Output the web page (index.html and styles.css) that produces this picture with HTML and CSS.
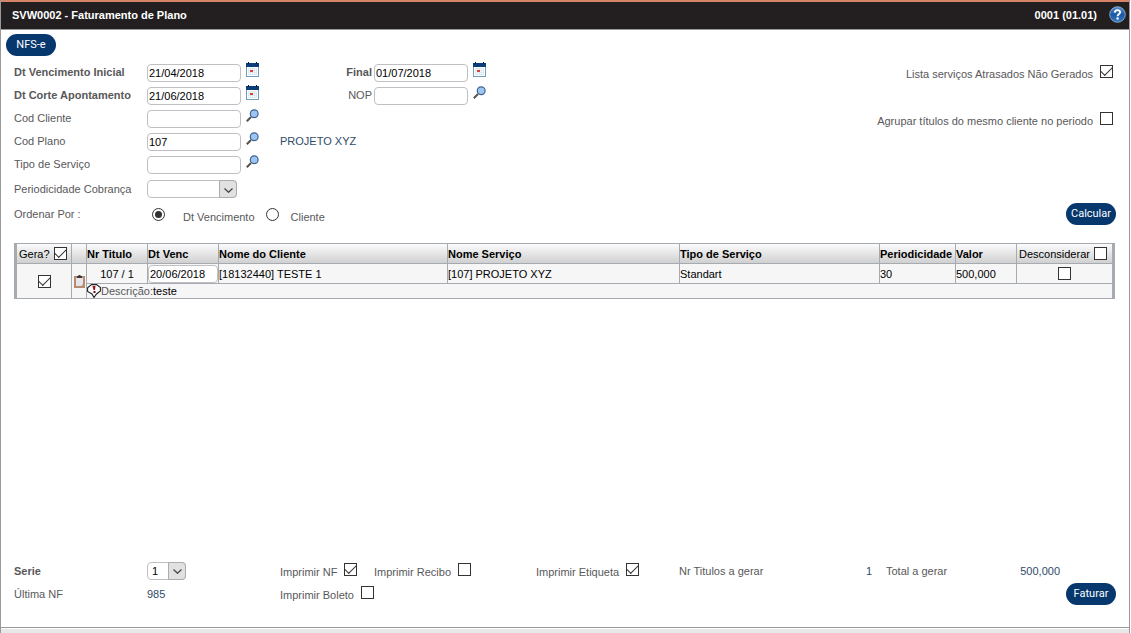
FILE: index.html
```html
<!DOCTYPE html>
<html lang="pt-BR">
<head>
<meta charset="utf-8">
<title>SVW0002 - Faturamento de Plano</title>
<link rel="stylesheet" href="styles.css">
</head>
<body>
<svg class="defs" aria-hidden="true">
  <symbol id="calendar" viewBox="0 0 13 15">
    <rect x="0.5" y="2.5" width="12" height="12" fill="#fff" stroke="#6f9dbd"/>
    <path d="M0 1h13v4H0z" fill="#0b3d78"/>
    <path d="M2 0h1v2H2zM10 0h1v2h-1z" fill="#001c40"/>
    <path d="M2.500 6.500h8v6h-8zM4.500 6v7M6.500 6v7M8.500 6v7M2 8.500h9M2 10.500h9" fill="none" stroke="#d5e4ea" stroke-width=".7"/>
    <rect x="4" y="8" width="3" height="2" fill="#d8403c"/>
  </symbol>
  <symbol id="search" viewBox="0 0 13 13">
    <path d="M0.800 12.200 5 8" stroke="#5a524c" stroke-width="2"/>
    <circle cx="8.200" cy="4.700" r="3.900" fill="#9cc5f5" stroke="#42648c" stroke-width="1.200"/>
  </symbol>
  <symbol id="chevron" viewBox="0 0 9 5">
    <path d="M0.500 0.500 4.500 4.300 8.500 0.500" fill="none" stroke="#444" stroke-width="1.200"/>
  </symbol>
</svg>
<div class="window">
  <header class="titlebar">
    <h1>SVW0002 - Faturamento de Plano</h1>
    <span class="code">0001 (01.01)</span>
    <button class="help" type="button" aria-label="Ajuda">
      <svg viewBox="0 0 17 17" width="17" height="17">
        <defs><linearGradient id="hg" x1="0" y1="0" x2="0" y2="1"><stop offset="0" stop-color="#5a92cf"/><stop offset=".5" stop-color="#1b58a5"/><stop offset="1" stop-color="#3479c4"/></linearGradient></defs>
        <circle cx="8.500" cy="8.500" r="7.800" fill="url(#hg)" stroke="#9dbbdc" stroke-width=".8"/>
        <path d="M5.800 6.600C5.900 3.300 11.300 3.400 11.200 6.300 11.100 8 8.700 8.200 8.600 10.200" fill="none" stroke="#fff" stroke-width="1.900"/>
        <circle cx="8.600" cy="12.500" r="1.200" fill="#fff"/>
      </svg>
    </button>
  </header>
  <main>
    <div class="toolbar"><button class="btn" type="button">NFS-e</button></div>
    <form class="filters">
      <div class="fields">
        <div class="row">
          <label class="strong" for="ini">Dt Vencimento Inicial</label>
          <span class="field"><input class="text" id="ini" value="21/04/2018"><button class="icon" type="button" aria-label="Calendário"><svg width="13" height="15"><use href="#calendar"/></svg></button></span>
          <span class="field"><label class="second strong" for="fim">Final</label><input class="text" id="fim" value="01/07/2018"><button class="icon" type="button" aria-label="Calendário"><svg width="13" height="15"><use href="#calendar"/></svg></button></span>
        </div>
        <div class="row">
          <label class="strong" for="corte">Dt Corte Apontamento</label>
          <span class="field"><input class="text" id="corte" value="21/06/2018"><button class="icon" type="button" aria-label="Calendário"><svg width="13" height="15"><use href="#calendar"/></svg></button></span>
          <span class="field"><label class="second" for="nop">NOP</label><input class="text" id="nop"><button class="icon" type="button" aria-label="Pesquisar"><svg width="13" height="13"><use href="#search"/></svg></button></span>
        </div>
        <div class="row">
          <label for="cli">Cod Cliente</label>
          <span class="field"><input class="text" id="cli"><button class="icon" type="button" aria-label="Pesquisar"><svg width="13" height="13"><use href="#search"/></svg></button></span>
        </div>
        <div class="row">
          <label for="plano">Cod Plano</label>
          <span class="field"><input class="text" id="plano" value="107"><button class="icon" type="button" aria-label="Pesquisar"><svg width="13" height="13"><use href="#search"/></svg></button></span>
          <output class="value" for="plano">PROJETO XYZ</output>
        </div>
        <div class="row">
          <label for="tipo">Tipo de Serviço</label>
          <span class="field"><input class="text" id="tipo"><button class="icon" type="button" aria-label="Pesquisar"><svg width="13" height="13"><use href="#search"/></svg></button></span>
        </div>
        <div class="row tall">
          <label for="per">Periodicidade Cobrança</label>
          <span class="select wide"><select id="per"><option></option></select><span class="arrow"><svg width="9" height="5"><use href="#chevron"/></svg></span></span>
        </div>
        <div class="row tall" role="radiogroup" aria-label="Ordenar Por">
          <span>Ordenar Por :</span>
          <span class="radios">
            <input type="radio" name="ord" id="o1" checked><label for="o1">Dt Vencimento</label>
            <input type="radio" name="ord" id="o2"><label for="o2">Cliente</label>
          </span>
        </div>
      </div>
      <div class="options">
        <label class="check">Lista serviços Atrasados Não Gerados<input type="checkbox" checked></label>
        <label class="check">Agrupar títulos do mesmo cliente no periodo<input type="checkbox"></label>
        <button class="btn" type="button">Calcular</button>
      </div>
    </form>
    <div class="grid">
      <table>
        <colgroup><col class="c-gera"><col class="c-ico"><col class="c-nr"><col class="c-dt"><col class="c-cli"><col><col class="c-tipo"><col class="c-per"><col class="c-val"><col class="c-des"></colgroup>
        <thead>
          <tr>
            <th class="plain"><label>Gera?<input type="checkbox" checked></label></th><th></th><th>Nr Titulo</th><th>Dt Venc</th><th>Nome do Cliente</th><th>Nome Serviço</th><th>Tipo de Serviço</th><th>Periodicidade</th><th>Valor</th><th class="plain"><label>Desconsiderar<input type="checkbox"></label></th>
          </tr>
        </thead>
        <tbody>
          <tr>
            <td class="center" rowspan="2"><input type="checkbox" checked aria-label="Gerar"></td>
            <td class="center" rowspan="2"><svg width="11" height="13" viewBox="0 0 11 13"><rect x="0" y="1" width="11" height="12" fill="#b98a6c"/><path d="M2 3h7v6L7 11H2z" fill="#e4e6ec"/><path d="M9 9 7 11h2z" fill="#b9bcc4"/><path d="M3 1h1.500V0h2v1H8v2H3z" fill="#3c3436"/></svg></td>
            <td class="center">107 / 1</td>
            <td class="edit"><input class="text" value="20/06/2018" aria-label="Dt Venc"></td>
            <td>[18132440] TESTE 1</td><td>[107] PROJETO XYZ</td><td>Standart</td><td>30</td><td>500,000</td>
            <td class="center"><input type="checkbox" aria-label="Desconsiderar"></td>
          </tr>
          <tr class="desc">
            <td colspan="8"><div class="note"><svg width="14" height="14" viewBox="0 0 14 14"><path d="M4.500.6h5l3.900 3v3.400L9.500 10 7 13.500 5 10 .6 7.500V3.800z" fill="#fff" stroke="#222" stroke-width="1.100"/><path d="M5.500 2h3l-.5 4H6.500z" fill="#a01020"/><path d="M6.500 7h2v2h-2z" fill="#700818"/></svg><span class="muted">Descrição:</span><span>teste</span></div></td>
          </tr>
        </tbody>
      </table>
    </div>
    <form class="summary">
      <label class="strong" for="serie">Serie</label>
      <span class="select short"><select id="serie"><option>1</option></select><span class="arrow"><svg width="9" height="5"><use href="#chevron"/></svg></span></span>
      <label class="check">Imprimir NF<input type="checkbox" checked></label>
      <label class="check">Imprimir Recibo<input type="checkbox"></label>
      <label class="check">Imprimir Etiqueta<input type="checkbox" checked></label>
      <span class="total count">Nr Titulos a gerar<output class="value">1</output></span>
      <span class="total amount">Total a gerar<output class="value">500,000</output></span>
      <span class="last">Última NF</span>
      <output class="value">985</output>
      <label class="check boleto">Imprimir Boleto<input type="checkbox"></label>
      <button class="btn send" type="button">Faturar</button>
    </form>
  </main>
  <div class="statusbar"></div>
</div>
</body>
</html>
```
FILE: styles.css
```css
* { box-sizing: border-box; }
body { margin: 0; background: #fff; color: #58585a; font: 11px/14px "Liberation Sans", Arial, sans-serif; }
button, input, select { font: inherit; margin: 0; }
svg { display: block; }
.defs { position: absolute; width: 0; height: 0; }
.strong { font-weight: bold; }
.value { color: #2f4a68; }

.window { min-height: 100vh; margin-right: 1px; display: flex; flex-direction: column; border-left: 1px solid #999; border-right: 1px solid #999; }
.titlebar { display: flex; align-items: center; height: 30px; padding: 0 3px 2px 11px; background: #231f20; border-top: 2px solid #d58468; border-bottom: 1px solid #999; color: #fff; font-weight: bold; }
.titlebar h1 { margin: 0; flex: 1; font-size: 11px; }
.help { margin-left: 12px; padding: 0; border: 0; background: none; }

main { flex: 1; display: flex; flex-direction: column; }
.toolbar { padding: 4px 5px 5px; }
.btn { display: flex; align-items: center; justify-content: center; width: 50px; height: 22px; padding: 0; border: 0; border-radius: 11px; background: #06376d; color: #fff; font: 11px/14px Roboto, sans-serif; }

.filters { display: flex; justify-content: space-between; padding: 0 13px; }
.row { display: grid; grid-template-columns: 133px 133px auto; align-items: center; height: 23px; }
.row > label, .row > span:first-child, .row > .value { padding-bottom: 2px; }
.tall { height: 26px; }
.tall > label { padding: 0; }
.field { display: flex; align-items: center; }
.second { width: 92px; margin-right: 2px; padding-bottom: 2px; text-align: right; }
.text { width: 94px; height: 18px; padding: 0 1px; border: 1px solid #c0c0c4; border-radius: 4px; background: #fff; color: #000; }
.icon { margin: 0 0 6px 5px; padding: 0; border: 0; background: none; }
.select { position: relative; display: block; height: 18px; }
.select select { appearance: none; width: 100%; height: 18px; padding: 0 4px; border: 1px solid #c0c0c4; border-radius: 4px; background: #fff; color: #000; display: block; }
.wide { width: 90px; }
.short { width: 39px; }
.arrow { position: absolute; top: 0; right: 0; display: flex; align-items: center; justify-content: center; width: 18px; height: 18px; padding-top: 2px; border: 1px solid #acacac; border-radius: 0 4px 4px 0; background: #e1e1e1; pointer-events: none; }
.radios { display: flex; align-items: center; padding-left: 5px; white-space: nowrap; }
.radios input { margin-bottom: 2px; }
.radios label { margin: 0 11px 0 18px; padding-top: 4px; }
.radios label:last-child { margin-left: 12px; }

input[type="checkbox"], input[type="radio"] { appearance: none; flex: none; display: grid; place-items: center; width: 13px; height: 13px; border: 1px solid #333; background: #fff; }
input[type="radio"] { border-radius: 50%; }
input[type="radio"]:checked::before { content: ""; width: 7px; height: 7px; border-radius: 50%; background: #333; }
input[type="checkbox"]:checked::before { content: ""; width: 10px; height: 5px; margin-bottom: 3px; border: solid #333; border-width: 0 0 1px 1px; transform: rotate(-45deg); }

.check { display: flex; align-items: center; gap: 7px; white-space: nowrap; }
.check input { margin-bottom: 5px; }
.options { display: flex; flex-direction: column; align-items: flex-end; padding: 4px 3px 0 0; }
.options .check { height: 18px; margin-bottom: 29px; }
.options .btn { margin: 44px -3px 0 0; }

.grid { margin: 15px 14px 0 13px; border: solid #a5abb0; border-width: 1px 3px 0; }
table { width: 100%; table-layout: fixed; border-spacing: 0; color: #000; }
th, td { height: 20px; padding: 0; border: solid #a5abb0; border-width: 0 1px 1px 0; text-align: left; white-space: nowrap; }
td { background: #f6f6f7; }
th:last-child, tr:first-child td:last-child, .desc td { border-right: 0; }
th { background: linear-gradient(#fbfbfb, #d0d0d0); }
th label { display: flex; align-items: center; gap: 4px; padding-left: 2px; }
.plain { font-weight: normal; }
.center { text-align: center; }
.center input, .center svg { margin: 0 auto; }
.edit .text { display: block; width: 100%; }
.desc td { height: 15px; }
.note { display: flex; align-items: center; height: 14px; }
.muted { color: #58585a; }
.c-gera { width: 55px; }
.c-ico { width: 15px; }
.c-nr, .c-val { width: 61px; }
.c-dt { width: 71px; }
.c-cli { width: 229px; }
.c-tipo { width: 200px; }
.c-per { width: 76px; }
.c-des { width: 95px; }

.summary { display: grid; grid-template-columns: 133px 133px 94px 162px 143px 1fr 180px 50px; grid-auto-rows: 23px; align-items: center; margin-top: auto; padding: 0 13px 22px; }
.summary .check { padding-top: 3px; }
.total { display: flex; justify-content: space-between; }
.count { margin-right: 14px; }
.amount { margin-right: 6px; }
.last { grid-column: 1; }
.boleto { grid-column: span 5; }
.send { grid-column: 8; }
.statusbar { height: 6px; border-top: 1px solid #999; background: linear-gradient(#fff 1px, #e8e8e8 1px); }
```
